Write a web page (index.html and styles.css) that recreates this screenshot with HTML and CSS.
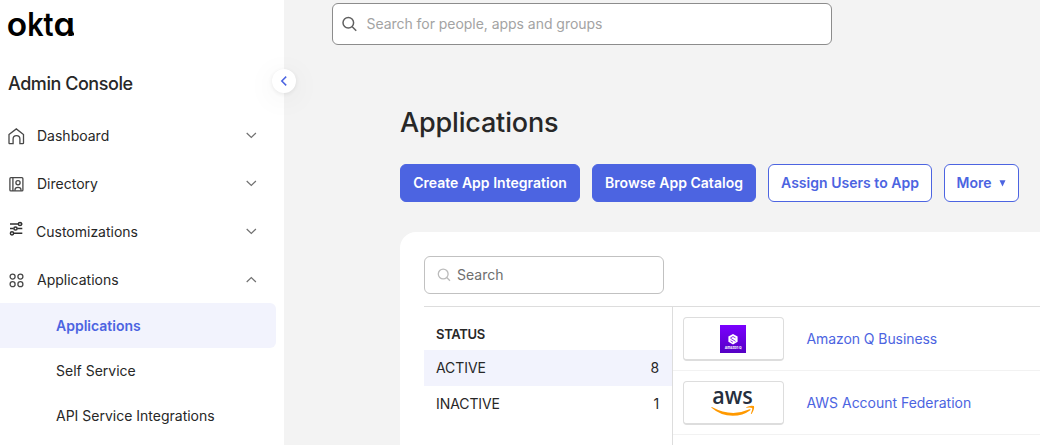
FILE: index.html
```html
<!DOCTYPE html>
<html lang="en">
<head>
<meta charset="utf-8">
<title>Applications - Okta Admin Console</title>
<link rel="stylesheet" href="styles.css">
</head>
<body>
<div class="shell">
  <aside class="sidebar">
    <svg class="logo" width="76" height="40" viewBox="0 0 76 40" role="img" aria-label="okta">
      <text class="logo-text" y="35.700"><tspan x="-1.200" textLength="20.400" lengthAdjust="spacingAndGlyphs">o</tspan><tspan x="19.200" textLength="16.400" lengthAdjust="spacingAndGlyphs">k</tspan><tspan x="35.600" textLength="10" lengthAdjust="spacingAndGlyphs">t</tspan><tspan x="45.600" textLength="21.400" lengthAdjust="spacingAndGlyphs">a</tspan></text>
      <path d="M64.200 31.500q0 2.900 1.800 2.900" fill="none" stroke="#000" stroke-width="2.200"/>
    </svg>
    <h2 class="console-title">Admin Console</h2>
    <button class="collapse" aria-label="Collapse navigation">
      <svg width="24" height="24" viewBox="0 0 24 24"><path d="M14.2 7.6 9.8 12l4.4 4.4"/></svg>
    </button>
    <nav class="nav">
      <a class="nav-item">
        <svg class="nav-icon" width="18" height="18" viewBox="0 0 18 18"><path d="M2 7.500 9.300 1.900l7.200 5.600v8.400q0 .7-.7.7h-2.900v-4.500a3.400 3.400 0 0 0-6.800 0v4.500H2.700q-.7 0-.7-.7z"/></svg>
        <span class="nav-label">Dashboard</span>
        <svg class="chevron" width="12" height="8" viewBox="0 0 12 8"><path d="M1.700 1 6.300 5.400l4.600-4.400"/></svg>
      </a>
      <a class="nav-item">
        <svg class="nav-icon" width="18" height="18" viewBox="0 0 18 18"><rect x="2.900" y="2.700" width="13" height="13.200" rx="1"/><path d="M5.900 2.700v13.200M8 15.700v-1q0-2.300 3-2.300t3 2.300v1"/><circle cx="11" cy="7.800" r="2.100"/></svg>
        <span class="nav-label">Directory</span>
        <svg class="chevron" width="12" height="8" viewBox="0 0 12 8"><path d="M1.700 1 6.300 5.400l4.600-4.400"/></svg>
      </a>
      <a class="nav-item nav-item-customizations">
        <svg class="nav-icon nav-icon-sliders" width="18" height="18" viewBox="0 0 18 18"><path d="M3 4h8.200M14.800 4h.5M3 8.500h3.500M10.300 8.500h5M3 13.300h.2M6.800 13.300h8.500"/><circle cx="13" cy="4" r="1.600"/><circle cx="8.500" cy="8.500" r="1.600"/><circle cx="5" cy="13.300" r="1.600"/></svg>
        <span class="nav-label">Customizations</span>
        <svg class="chevron" width="12" height="8" viewBox="0 0 12 8"><path d="M1.700 1 6.300 5.400l4.600-4.400"/></svg>
      </a>
      <a class="nav-item">
        <svg class="nav-icon" width="18" height="18" viewBox="0 0 18 18"><circle cx="5.600" cy="5.600" r="2.500"/><circle cx="13.400" cy="5.600" r="2.500"/><circle cx="5.600" cy="13.200" r="2.500"/><circle cx="13.400" cy="13.200" r="2.500"/></svg>
        <span class="nav-label">Applications</span>
        <svg class="chevron" width="12" height="8" viewBox="0 0 12 8"><path d="M1.700 6 6.300 1.600 10.900 6"/></svg>
      </a>
      <a class="sub-item sub-item-active">Applications</a>
      <a class="sub-item">Self Service</a>
      <a class="sub-item">API Service Integrations</a>
    </nav>
  </aside>

  <main class="main">
    <div class="global-search">
      <svg width="16" height="16" viewBox="0 0 16 16"><circle cx="6.300" cy="6.800" r="5.300"/><path d="m10.200 10.700 4 4"/></svg>
      <span>Search for people, apps and groups</span>
    </div>
    <section class="page">
      <h1 class="page-title">Applications</h1>
      <div class="actions">
        <button class="btn btn-primary btn-create">Create App Integration</button>
        <button class="btn btn-primary btn-browse">Browse App Catalog</button>
        <button class="btn btn-assign">Assign Users to App</button>
        <button class="btn btn-more">More <svg width="8" height="8" viewBox="0 0 8 8"><path d="M.500 1.300h6L3.500 7.500z"/></svg></button>
      </div>
      <div class="card">
        <div class="card-search">
          <svg width="14" height="14" viewBox="0 0 14 14"><circle cx="6.200" cy="6" r="4.900"/><path d="m9.700 9.500 3.300 3.300"/></svg>
          <span>Search</span>
        </div>
        <div class="card-body">
          <div class="filters">
            <h3 class="filter-title">STATUS</h3>
            <div class="filter filter-active"><span>ACTIVE</span><span>8</span></div>
            <div class="filter"><span>INACTIVE</span><span>1</span></div>
          </div>
          <div class="apps">
            <div class="app">
              <div class="app-logo">
                <svg width="26" height="28" viewBox="0 0 26 28">
                  <defs><linearGradient id="q-fill" x1="0" y1="0" x2="0" y2="1"><stop offset="0" stop-color="#7b00ff"/><stop offset="1" stop-color="#5500c4"/></linearGradient></defs>
                  <rect width="26" height="28" fill="url(#q-fill)"/>
                  <path d="m13 9 4.600 2.600v5.200L13 19.400l-4.600-2.600v-5.200z" fill="#fff"/>
                  <path d="m10.500 12.900 2.500-1.400 2.500 1.400M10.500 13.200l5 3.100M10.500 15.800l2.500 1.500" fill="none" stroke="#6d00e4" stroke-width=".8"/>
                  <text class="q-text" x="4.700" y="24" textLength="17" lengthAdjust="spacingAndGlyphs">Amazon Q</text>
                </svg>
              </div>
              <a class="app-name app-name-q">Amazon Q Business</a>
            </div>
            <div class="app">
              <div class="app-logo">
                <svg width="44" height="28" viewBox="0 0 44 28">
                  <text class="aws-text" x="1.200" y="14.600" textLength="40.500" lengthAdjust="spacingAndGlyphs">aws</text>
                  <path d="M.8 18Q20.300 28.500 38.500 20.300q1.700-.5.800.9Q31.800 26.800 21.800 26.800 9.800 26.800.5 18.700q-.5-.8.3-.7z" fill="#f90"/>
                  <path d="M35.200 18.300q3.900-2.400 7.700-1.300 1 2.400-2 7.500-1.400 1.300-.9-.3 1.700-4.200 1.100-5.200-.7-.8-5.400-.3-1.300-.1-.5-.4z" fill="#f90"/>
                </svg>
              </div>
              <a class="app-name">AWS Account Federation</a>
            </div>
          </div>
        </div>
      </div>
    </section>
  </main>
</div>
</body>
</html>
```
FILE: styles.css
```css
* { box-sizing: border-box; }
body {
  margin: 0;
  overflow: hidden;
  background: #f3f3f3;
  color: #272727;
  font: 14px/20px Inter, "Liberation Sans", sans-serif;
}
svg { display: block; flex: none; }
h1, h2, h3 { margin: 0; }
.shell { display: flex; width: 1040px; height: 445px; }

.sidebar { position: relative; flex: none; width: 284px; background: #fff; }
.logo { margin-left: 8px; overflow: visible; }
.logo-text { font: 600 32.500px Inter, sans-serif; font-feature-settings: "cv11"; fill: #000; }
.console-title { padding: 34px 0 0 8px; height: 72px; font-size: 18px; line-height: 20px; font-weight: 500; letter-spacing: -.45px; }
.collapse {
  position: absolute; left: 272px; top: 69px; width: 24px; height: 24px; padding: 0;
  border: 0; border-radius: 50%; background: #fff; box-shadow: 0 1px 4px rgba(0,0,0,.08), 0 5px 30px rgba(0,0,0,.07);
}
.collapse path { fill: none; stroke: #4c64e1; stroke-width: 1.500; }
.nav-item { display: flex; align-items: center; height: 48px; padding: 0 27px 0 7px; }
.nav { display: block; }
.nav-icon { fill: none; stroke: #484848; stroke-width: 1.300; }
.nav-icon-sliders { position: relative; top: -3px; stroke: #303030; stroke-width: 1.500; }
.nav-label { flex: 1; padding-left: 12px; }
.nav-item-customizations .nav-label { padding-left: 11px; }
.chevron { fill: none; stroke: #707070; stroke-width: 1.200; }
.sub-item { display: block; position: relative; top: -1px; height: 45px; padding: 13px 0 0 56px; }
.sub-item-active { margin-right: 8px; border-radius: 0 6px 6px 0; background: #f2f3fd; color: #4c64e1; font-weight: 600; }

.main { flex: 1; min-width: 0; padding-top: 3px; }
.global-search {
  display: flex; align-items: center; gap: 8.500px; width: 500px; height: 42px; margin-left: 48px; padding: 0 9px;
  border: 1px solid #8c8c8c; border-radius: 6px; background: #fff; color: #a3a3a3; letter-spacing: -.04px;
}
.global-search svg { fill: none; stroke: #606060; stroke-width: 1.500; }
.page { padding: 62px 0 0 116px; }
.page-title { font-size: 27px; line-height: 32px; font-weight: 500; letter-spacing: -.17px; }
.actions { display: flex; gap: 12px; padding: 25px 0 30px; }
.btn {
  display: flex; align-items: center; justify-content: center; height: 38px; padding: 0;
  border: 1px solid #4c64e1; border-radius: 6px; background: #fff; color: #4c64e1;
  font: 600 14px/20px Inter, sans-serif; letter-spacing: .02px; white-space: nowrap;
}
.btn-primary { background: #4c64e1; color: #fff; }
.btn-create { width: 180px; }
.btn-browse { width: 164px; }
.btn-assign { width: 164px; }
.btn-more { width: 75px; gap: 7px; }
.btn svg { fill: #4c64e1; }

.card { height: 213px; padding: 24px 0 0 24px; border-radius: 16px 0 0 0; background: #fff; }
.card-search {
  display: flex; align-items: center; gap: 6px; width: 240px; height: 38px; padding-left: 12px;
  border: 1px solid #c1c1c1; border-radius: 6px; color: #6e6e6e;
}
.card-search svg { fill: none; stroke: #bbb; stroke-width: 1.300; }
.card-body { display: flex; margin-top: 12px; height: 139px; border-top: 1px solid #ddd; }
.filters { width: 248px; padding-top: 17px; }
.filter-title { height: 26px; padding-left: 12px; font-size: 13px; line-height: 20px; font-weight: 600; letter-spacing: -.3px; }
.filter { display: flex; align-items: center; justify-content: space-between; height: 36px; padding: 0 13px 0 12px; letter-spacing: -.08px; }
.filter-active { background: #f2f3fd; }
.apps { flex: 1; border-left: 1px solid #ddd; }
.app { display: flex; align-items: center; gap: 22.500px; height: 64px; padding-left: 10px; border-bottom: 1px solid #f2f2f2; }
.app-logo {
  display: flex; align-items: center; justify-content: center; width: 101px; height: 44px; padding: 1px 1px 0 0;
  border: 1px solid #ddd; border-bottom-width: 2px; border-radius: 4px;
}
.app-logo svg { overflow: visible; }
.app-name { color: #4c64e1; letter-spacing: -.02px; }
.app-name-q { letter-spacing: -.08px; }
.q-text { font: 700 4px Inter, sans-serif; fill: #fff; }
.aws-text { font: 600 24px "Open Sans", sans-serif; fill: #252f3e; }
```
